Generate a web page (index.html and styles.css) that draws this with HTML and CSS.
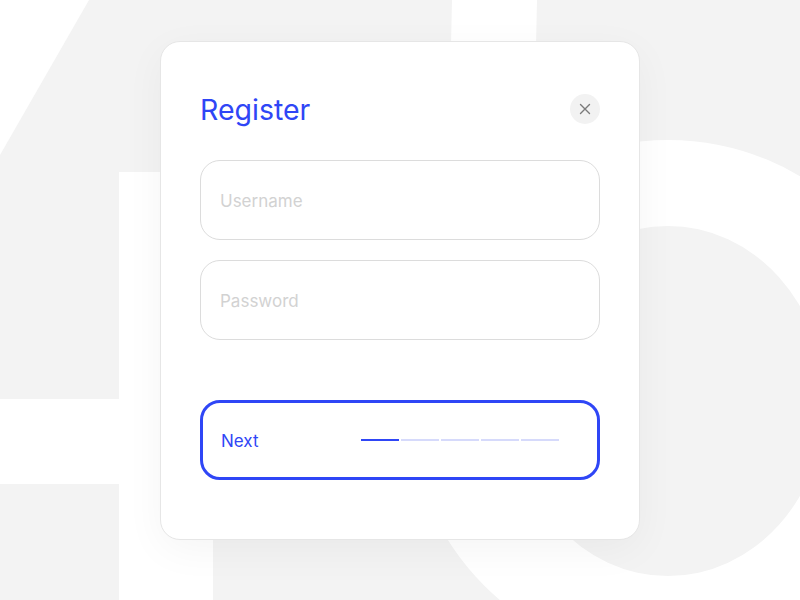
FILE: index.html
```html
<!DOCTYPE html>
<html lang="en">
<head>
<meta charset="utf-8">
<title>Register</title>
<link rel="stylesheet" href="styles.css">
</head>
<body>
<svg class="backdrop" width="800" height="600" viewBox="0 0 800 600" aria-hidden="true">
  <rect width="800" height="600" fill="#f3f3f3"/>
  <polygon points="0,0 89,0 0,155" fill="#fff"/>
  <rect x="119" y="172" width="94" height="428" fill="#fff"/>
  <rect x="0" y="399" width="119" height="85" fill="#fff"/>
  <polygon points="452,0 537,0 530,320 445,320" fill="#fff"/>
  <path fill="#fff" fill-rule="evenodd" d="M408 401 a260 261 0 1 0 520 0 a260 261 0 1 0 -520 0 Z M511 401 a157 175 0 1 0 314 0 a157 175 0 1 0 -314 0 Z"/>
</svg>
<main class="page">
  <section class="card">
    <header class="card-head">
      <h1 class="title">Register</h1>
      <button class="close" type="button" aria-label="Close">
        <svg width="12" height="12" viewBox="0 0 12 12"><path d="M1.5 1.5 L10.5 10.5 M10.5 1.5 L1.5 10.5" stroke="#7a7a7a" stroke-width="1.4" stroke-linecap="round"/></svg>
      </button>
    </header>
    <div class="fields">
      <input class="field" type="text" placeholder="Username">
      <input class="field" type="password" placeholder="Password">
    </div>
    <button class="next" type="button">
      <span class="next-label">Next</span>
      <span class="steps">
        <span class="step active"></span>
        <span class="step"></span>
        <span class="step"></span>
        <span class="step"></span>
        <span class="step"></span>
      </span>
    </button>
  </section>
</main>
</body>
</html>
```

FILE: styles.css
```css
* { box-sizing: border-box; }

html, body {
  margin: 0;
  width: 800px;
  height: 600px;
  overflow: hidden;
}

body {
  position: relative;
  background: #f3f3f3;
  font-family: Inter, "Liberation Sans", sans-serif;
}

.backdrop {
  position: absolute;
  left: 0;
  top: 0;
}

.page {
  position: relative;
  display: flex;
  justify-content: center;
  padding-top: 41px;
}

.card {
  width: 480px;
  height: 499px;
  background: #fff;
  border: 1px solid #e6e6e6;
  border-radius: 20px;
  box-shadow: 0 10px 40px rgba(0, 0, 0, 0.045);
  padding: 40px 39px 0;
  display: flex;
  flex-direction: column;
}

.card-head {
  height: 54px;
  display: flex;
  align-items: center;
  justify-content: space-between;
  margin-bottom: 24px;
}

.title {
  margin: 0;
  font-size: 28.5px;
  font-weight: 400;
  color: #2f46f6;
  letter-spacing: 0;
  padding-top: 1px;
}

.close {
  width: 30px;
  height: 30px;
  border: 0;
  border-radius: 50%;
  background: #f2f2f2;
  padding: 0;
  display: flex;
  align-items: center;
  justify-content: center;
}

.fields {
  display: flex;
  flex-direction: column;
  gap: 20px;
}

.field {
  width: 100%;
  height: 80px;
  border: 1px solid #dcdcdc;
  border-radius: 20px;
  padding: 1px 19px 0;
  font-family: inherit;
  font-size: 17px;
  color: #333;
  background: #fff;
  outline: none;
}

.field::placeholder {
  color: #d2d2d2;
}

.next {
  margin-top: 60px;
  width: 100%;
  height: 80px;
  border: 3px solid #2f46f6;
  border-radius: 20px;
  background: #fff;
  padding: 0 0 0 18px;
  display: flex;
  align-items: center;
  font-family: inherit;
  font-size: 17px;
  color: #2f46f6;
}

.next-label {
  width: 140px;
  text-align: left;
  padding-top: 1px;
}

.steps {
  display: flex;
  gap: 2px;
}

.step {
  width: 38px;
  height: 2px;
  background: #d6dafb;
}

.step.active {
  background: #2f46f6;
}
```
